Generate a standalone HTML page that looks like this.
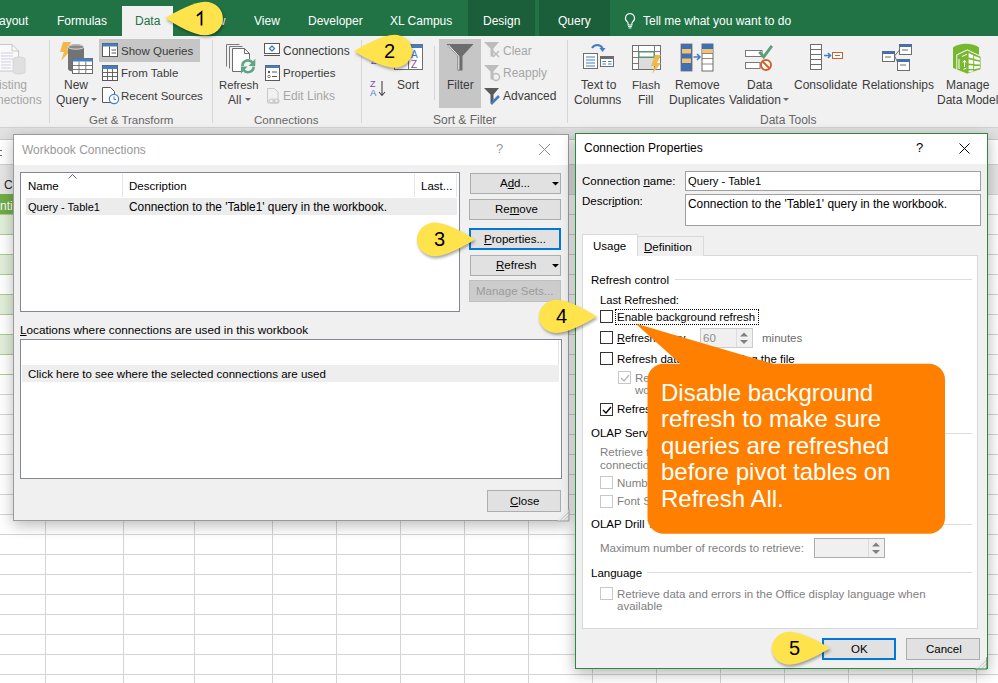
<!DOCTYPE html>
<html><head><meta charset="utf-8">
<style>
*{box-sizing:border-box;margin:0;padding:0}
html,body{width:998px;height:683px;overflow:hidden;background:#fff}
body{position:relative;font-family:"Liberation Sans",sans-serif}
.a{position:absolute}
.t{position:absolute;white-space:nowrap;font-size:11.5px;line-height:14px;color:#000}
.tab{color:#fff;font-size:12px}
.rb{color:#3b3b3b}
.gl{color:#666}
.dis{color:#a6a6a6}
.sep{position:absolute;width:1px;background:#d6d6d6}
.hl{position:absolute;background:#e1e1e1}
.u{text-decoration:underline}
.btn{background:#e1e1e1;border:1px solid #adadad}
.cb{width:13px;height:13px;background:#fff;border:1px solid #333}
</style></head><body>

<!-- ===== spreadsheet background ===== -->
<div class="a" style="left:0;top:127px;width:998px;height:13px;background:#e1e1e1;border-top:1px solid #d2d2d2;border-bottom:1px solid #c8c8c8"></div>
<div class="a" style="left:0;top:140px;width:998px;height:24px;background:#fff"></div>
<div class="a" style="left:0;top:164px;width:998px;height:30px;background:#e6e6e6;border-top:1px solid #d0d0d0"></div>
<svg class="a" style="left:0;top:148px" width="4" height="12"><path d="M0 2.5h2M0 7.5h2" stroke="#666" stroke-width="1.2"/></svg>
<div class="t" style="left:4px;top:178px;color:#262626;font-size:12px">C</div>
<div id="grid" class="a" style="left:0;top:194px;width:998px;height:489px;background-image:linear-gradient(to bottom,#d4d4d4 0,#d4d4d4 1px,transparent 1px);background-size:998px 20px"></div>
<div class="a" style="left:45px;top:164px;width:1px;height:519px;background:#d4d4d4"></div><div class="a" style="left:123px;top:164px;width:1px;height:519px;background:#d4d4d4"></div><div class="a" style="left:194px;top:164px;width:1px;height:519px;background:#d4d4d4"></div><div class="a" style="left:272px;top:164px;width:1px;height:519px;background:#d4d4d4"></div><div class="a" style="left:336px;top:164px;width:1px;height:519px;background:#d4d4d4"></div><div class="a" style="left:400px;top:164px;width:1px;height:519px;background:#d4d4d4"></div><div class="a" style="left:464px;top:164px;width:1px;height:519px;background:#d4d4d4"></div><div class="a" style="left:528px;top:164px;width:1px;height:519px;background:#d4d4d4"></div><div class="a" style="left:592px;top:164px;width:1px;height:519px;background:#d4d4d4"></div><div class="a" style="left:656px;top:164px;width:1px;height:519px;background:#d4d4d4"></div><div class="a" style="left:720px;top:164px;width:1px;height:519px;background:#d4d4d4"></div><div class="a" style="left:784px;top:164px;width:1px;height:519px;background:#d4d4d4"></div><div class="a" style="left:848px;top:164px;width:1px;height:519px;background:#d4d4d4"></div><div class="a" style="left:912px;top:164px;width:1px;height:519px;background:#d4d4d4"></div><div class="a" style="left:976px;top:164px;width:1px;height:519px;background:#d4d4d4"></div>
<!-- table rows at left -->
<div class="a" style="left:0;top:194px;width:14px;height:20px;background:#70ad47"></div>
<div class="t" style="left:0px;top:199px;color:#fff;font-size:12px">nti</div>
<div class="a" style="left:0;top:214px;width:14px;height:20px;background:#e2efda;border-top:1px solid #a9d08e"></div>
<div class="a" style="left:0;top:234px;width:14px;height:20px;background:#fff;border-top:1px solid #a9d08e"></div>
<div class="a" style="left:0;top:254px;width:14px;height:20px;background:#e2efda;border-top:1px solid #a9d08e"></div>
<div class="a" style="left:0;top:274px;width:14px;height:20px;background:#fff;border-top:1px solid #a9d08e"></div>
<div class="a" style="left:0;top:294px;width:14px;height:20px;background:#e2efda;border-top:1px solid #a9d08e"></div>
<div class="a" style="left:0;top:314px;width:14px;height:20px;background:#fff;border-top:1px solid #a9d08e"></div>
<div class="a" style="left:0;top:334px;width:14px;height:20px;background:#e2efda;border-top:1px solid #a9d08e"></div>
<div class="a" style="left:0;top:354px;width:14px;height:21px;background:#fff;border-top:1px solid #a9d08e;border-bottom:1px solid #a9d08e"></div>

<!-- ===== tab bar ===== -->
<div class="a" style="left:0;top:0;width:998px;height:36px;background:#217346"></div>
<div class="a" style="left:468px;top:0;width:67px;height:36px;background:#1b5e3a"></div>
<div class="a" style="left:539px;top:0;width:71px;height:36px;background:#1b5e3a"></div>
<div class="a" style="left:122px;top:6px;width:51px;height:30px;background:#f1f1f1"></div>
<div class="t tab" style="left:-1px;top:14px">ayout</div>
<div class="t tab" style="left:57px;top:14px">Formulas</div>
<div class="t tab" style="left:135px;top:14px;color:#217346">Data</div>
<div class="t tab" style="left:186px;top:14px">Review</div>
<div class="t tab" style="left:254px;top:14px">View</div>
<div class="t tab" style="left:308px;top:14px">Developer</div>
<div class="t tab" style="left:390px;top:14px">XL Campus</div>
<div class="t tab" style="left:483px;top:14px">Design</div>
<div class="t tab" style="left:558px;top:14px">Query</div>
<svg class="a" style="left:622px;top:11px" width="16" height="18" viewBox="0 0 16 18"><path d="M8 2.5a4.6 4.6 0 0 0-2.8 8.2c.6.6.9 1.3.9 2.1v1.2h3.8v-1.2c0-.8.3-1.5.9-2.1A4.6 4.6 0 0 0 8 2.5z" fill="none" stroke="#fff" stroke-width="1.1"/><path d="M6.1 15.5h3.8M6.6 17h2.8" stroke="#fff" stroke-width="1.1"/></svg>
<div class="t tab" style="left:643px;top:14px">Tell me what you want to do</div>

<!-- ===== ribbon ===== -->
<div class="a" style="left:0;top:36px;width:998px;height:91px;background:#f1f1f1"></div>
<div id="ribbon">
<!-- group: existing connections (faded) -->
<svg class="a" style="left:0;top:43px" width="28" height="32" viewBox="0 0 28 32"><path d="M-2 1.5h14l6.5 6.5v20H-2z" fill="#fafafa" stroke="#c8c8c8"/><path d="M12 1.5v6.5h6.5" fill="none" stroke="#c8c8c8"/><path d="M1 10h12M1 13h12M1 16h12M1 19h10M1 22h10M1 25h10" stroke="#d2cde0" stroke-width="1"/><path d="M13 16a6 2 0 0 1 12 0v13a6 2 0 0 1-12 0z" fill="#e0e0e0" stroke="#d6d6d6"/></svg>
<div class="t dis" style="left:-1px;top:78px;font-size:12px">isting</div>
<div class="t dis" style="left:-3px;top:93px;font-size:12px">nections</div>
<div class="sep" style="left:49px;top:40px;height:83px"></div>
<!-- New Query -->
<svg class="a" style="left:58px;top:41px" width="36" height="35" viewBox="0 0 36 35"><path d="M5 1h8l-4 8h4L3 20l3-9H2z" fill="#f0b94a"/><path d="M10 6a8 3 0 0 1 16 0v22a8 3 0 0 1-16 0z" fill="#737373"/><ellipse cx="18" cy="6" rx="8" ry="2.2" fill="#8a8a8a" stroke="#f1f1f1" stroke-width=".8"/><rect x="14.5" y="17.5" width="20" height="15" fill="#fff" stroke="#6d6d6d"/><rect x="14.5" y="17.5" width="20" height="3" fill="#4a7ebb"/><path d="M14.5 24.5h20M14.5 28.5h20M21 20.5v12M27.8 20.5v12" stroke="#6d6d6d" stroke-width=".9"/></svg>
<div class="t rb" style="left:64px;top:78px;font-size:12px">New</div>
<div class="t rb" style="left:56px;top:93px;font-size:12px">Query</div>
<svg class="a" style="left:91px;top:98px" width="6" height="4"><path d="M0 0h6L3 3z" fill="#666"/></svg>
<div class="hl" style="left:99px;top:39px;width:101px;height:23px;background:#c6c6c6"></div>
<svg class="a" style="left:101px;top:42px" width="18" height="16" viewBox="0 0 18 16"><rect x="1.5" y="1.5" width="15" height="13" fill="#fff" stroke="#595959"/><rect x="1.5" y="1.5" width="15" height="3" fill="#4a7ebb"/><path d="M8.5 4.5v10M10.5 8h4.5M10.5 11h4.5" stroke="#595959"/></svg>
<div class="t rb" style="left:121px;top:44px;font-size:11.5px">Show Queries</div>
<svg class="a" style="left:101px;top:64px" width="18" height="18" viewBox="0 0 18 18"><rect x="1.5" y="1.5" width="15" height="15" fill="#fff" stroke="#595959"/><rect x="1.5" y="1.5" width="15" height="3.5" fill="#4a7ebb"/><path d="M1.5 8.5h15M1.5 12.5h15M6.5 5v11.5M11.5 5v11.5" stroke="#595959" stroke-width=".9"/></svg>
<div class="t rb" style="left:121px;top:66px;font-size:11.5px">From Table</div>
<svg class="a" style="left:101px;top:86px" width="19" height="19" viewBox="0 0 19 19"><path d="M1.5 1.5h8l4 4v11h-12z" fill="#fff" stroke="#595959"/><circle cx="13" cy="13" r="4.6" fill="#fff" stroke="#3f7dc6" stroke-width="1.2"/><path d="M13 10.5v3h2" fill="none" stroke="#3f7dc6"/></svg>
<div class="t rb" style="left:121px;top:89px;font-size:11.5px">Recent Sources</div>
<div class="t gl" style="left:89px;top:113px;font-size:11.5px">Get &amp; Transform</div>
<div class="sep" style="left:212px;top:40px;height:83px"></div>
<!-- Refresh All -->
<svg class="a" style="left:224px;top:43px" width="34" height="33" viewBox="0 0 34 33"><path d="M2.5 1.5h13M2.5 1.5v22" fill="none" stroke="#7a7a7a"/><path d="M5.5 3.5h13M5.5 3.5v22" fill="none" stroke="#7a7a7a"/><path d="M8.5 5.5h12l5 5v18h-17z" fill="#fff" stroke="#6d6d6d"/><path d="M20.5 5.5v5h5" fill="none" stroke="#6d6d6d"/><circle cx="24" cy="23.3" r="7.5" fill="#f1f1f1"/><path d="M18.3 23A5.7 5.7 0 0 1 28.6 19.8M29.7 23.6A5.7 5.7 0 0 1 19.4 26.8" fill="none" stroke="#5fa585" stroke-width="2.6"/><path d="M31.3 15.8V23H24.5Z M16.9 30.8V23.6H23.5Z" fill="#5fa585"/></svg>
<div class="t rb" style="left:219px;top:78px;font-size:11.3px">Refresh</div>
<div class="t rb" style="left:228px;top:93px;font-size:12px">All</div>
<svg class="a" style="left:245px;top:98px" width="6" height="4"><path d="M0 0h6L3 3z" fill="#666"/></svg>
<svg class="a" style="left:263px;top:42px" width="18" height="15" viewBox="0 0 18 15"><rect x="1.5" y="1.5" width="15" height="10" fill="#fff" stroke="#595959"/><path d="M1 13.5h16" stroke="#595959"/><path d="M9 4l2.5 2.5L9 9 6.5 6.5z" fill="none" stroke="#3f7dc6" stroke-width="1.3"/></svg>
<div class="t rb" style="left:283px;top:44px;font-size:12px">Connections</div>
<svg class="a" style="left:264px;top:64px" width="17" height="18" viewBox="0 0 17 18"><rect x="1.5" y="1.5" width="14" height="15" fill="#fff" stroke="#595959"/><rect x="1.5" y="1.5" width="14" height="2.5" fill="#4a7ebb"/><circle cx="5" cy="8" r="1.2" fill="#595959"/><circle cx="5" cy="12.5" r="1.2" fill="none" stroke="#595959" stroke-width=".8"/><path d="M8 8h5M8 12.5h5" stroke="#595959"/></svg>
<div class="t rb" style="left:283px;top:66px;font-size:11.5px">Properties</div>
<svg class="a" style="left:265px;top:87px" width="16" height="18" viewBox="0 0 16 18"><path d="M2.5 1.5h7l3.5 3.5v11h-10.5z" fill="none" stroke="#c8c8c8"/><ellipse cx="7" cy="14" rx="3" ry="2" fill="none" stroke="#c8c8c8" stroke-width="1.2"/><ellipse cx="11" cy="14" rx="3" ry="2" fill="none" stroke="#c8c8c8" stroke-width="1.2"/></svg>
<div class="t dis" style="left:283px;top:89px;font-size:12px">Edit Links</div>
<div class="t gl" style="left:254px;top:113px;font-size:11.6px">Connections</div>
<div class="sep" style="left:361px;top:40px;height:83px"></div>
<!-- Sort -->
<svg class="a" style="left:368px;top:43px" width="56" height="28" viewBox="0 0 56 28"><rect x="26.5" y="1.5" width="28" height="25" fill="#fff" stroke="#6d6d6d"/><rect x="26.5" y="1.5" width="28" height="3.5" fill="#4a7ebb"/><path d="M40.5 5v21.5" stroke="#6d6d6d"/><text x="43" y="15" font-family="Liberation Sans" font-size="10" fill="#3f7dc6">A</text><text x="43" y="25" font-family="Liberation Sans" font-size="10" fill="#7d48a8">Z</text><text x="3" y="12" font-family="Liberation Sans" font-size="9" fill="#3f7dc6">A</text><text x="3" y="21" font-family="Liberation Sans" font-size="9" fill="#7d48a8">Z</text></svg>
<svg class="a" style="left:369px;top:79px" width="18" height="19" viewBox="0 0 18 19"><text x="1" y="8" font-family="Liberation Sans" font-size="9" fill="#7d48a8">Z</text><text x="1" y="17" font-family="Liberation Sans" font-size="9.5" fill="#3f7dc6">A</text><path d="M13 2v14M10 13l3 3.5 3-3.5" fill="none" stroke="#444" stroke-width="1.1"/></svg>
<div class="t rb" style="left:397px;top:78px;font-size:12px">Sort</div>
<div class="sep" style="left:434px;top:46px;height:54px"></div>
<div class="hl" style="left:439px;top:39px;width:42px;height:69px;background:#c6c6c6"></div>
<svg class="a" style="left:445px;top:43px" width="30" height="29" viewBox="0 0 30 29"><path d="M1.5 1h27L17.5 13v14.5h-5V13z" fill="#6d6d6d"/><path d="M3.5 2l10.3 11.3v13.5" fill="none" stroke="#fff" stroke-width="1"/></svg>
<div class="t rb" style="left:447px;top:78px;font-size:12px">Filter</div>
<svg class="a" style="left:483px;top:41px" width="18" height="18" viewBox="0 0 18 18"><path d="M1 1h15l-5.5 6.5v8h-3v-8z" fill="#bdbdbd"/><path d="M10 10l6 6M16 10l-6 6" stroke="#bdbdbd" stroke-width="1.5"/></svg>
<div class="t dis" style="left:503px;top:44px;font-size:12px">Clear</div>
<svg class="a" style="left:483px;top:64px" width="18" height="18" viewBox="0 0 18 18"><path d="M1 1h15l-5.5 6.5v8h-3v-8z" fill="#bdbdbd"/><circle cx="13" cy="13" r="3.5" fill="none" stroke="#bdbdbd" stroke-width="1.5"/></svg>
<div class="t dis" style="left:503px;top:66px;font-size:12px">Reapply</div>
<svg class="a" style="left:483px;top:87px" width="18" height="19" viewBox="0 0 18 19"><path d="M1 1h15l-5.5 6.5v8h-3v-8z" fill="#595959"/><path d="M8 17l8-8" stroke="#3f7dc6" stroke-width="2.5"/></svg>
<div class="t rb" style="left:503px;top:89px;font-size:12px">Advanced</div>
<div class="t gl" style="left:433px;top:113px;font-size:12px">Sort &amp; Filter</div>
<div class="sep" style="left:567px;top:40px;height:83px"></div>
<!-- Data tools -->
<svg class="a" style="left:582px;top:42px" width="33" height="28" viewBox="0 0 33 28"><path d="M10 6a6 6 0 0 1 10.5 0" fill="none" stroke="#3f7dc6" stroke-width="2"/><path d="M17.5 6h6l-3 4z" fill="#3f7dc6"/><rect x="1.5" y="11.5" width="14" height="15" fill="#fff" stroke="#6d6d6d"/><path d="M4 15h9M4 18h9M4 21h9M4 24h9" stroke="#3f7dc6"/><rect x="18.5" y="14.5" width="13" height="10" fill="#fff" stroke="#6d6d6d"/><rect x="18.5" y="14.5" width="13" height="2.5" fill="#6d6d6d"/><path d="M20.5 19.5h3.5M26 19.5h3.5M20.5 22h3.5M26 22h3.5" stroke="#3f7dc6"/></svg>
<div class="t rb" style="left:581px;top:78px;font-size:12px">Text to</div>
<div class="t rb" style="left:574px;top:93px;font-size:12px">Columns</div>
<svg class="a" style="left:631px;top:44px" width="32" height="31" viewBox="0 0 32 31"><rect x="1.5" y="1.5" width="28" height="24" fill="#fff" stroke="#6d6d6d"/><path d="M1.5 7.5h28M1.5 13.5h28M1.5 19.5h28M7.5 1.5v24M23.5 1.5v24" stroke="#6d6d6d" stroke-width=".9"/><rect x="8" y="8" width="15" height="5" fill="#fff" stroke="#4d9e6a"/><rect x="8" y="14" width="15" height="11" fill="#dcdcdc"/><path d="M24 11h6l-4 8h4l-9 11 3-8h-4z" fill="#f0b94a"/></svg>
<div class="t rb" style="left:632px;top:78px;font-size:11.5px">Flash</div>
<div class="t rb" style="left:638px;top:93px;font-size:12px">Fill</div>
<svg class="a" style="left:680px;top:43px" width="34" height="29" viewBox="0 0 34 29"><rect x="1" y="1" width="11" height="27" fill="#3f6fb4" stroke="#6d6d6d" stroke-width=".8"/><rect x="2" y="6" width="9" height="4.5" fill="#f3c26c"/><rect x="2" y="15.5" width="9" height="4.5" fill="#f3c26c"/><rect x="22" y="1" width="11" height="27" fill="#fff" stroke="#6d6d6d" stroke-width="1"/><rect x="22" y="1" width="11" height="5" fill="#3f6fb4"/><rect x="22.5" y="6" width="10" height="4.5" fill="#f3c26c"/><path d="M22 10.5h11M22 15.5h11M22 21h11" stroke="#6d6d6d" stroke-width=".8"/><path d="M13.5 14h6M17 11l3 3-3 3" fill="none" stroke="#3f7dc6" stroke-width="1.5"/></svg>
<div class="t rb" style="left:675px;top:78px;font-size:12px">Remove</div>
<div class="t rb" style="left:669px;top:93px;font-size:12px">Duplicates</div>
<svg class="a" style="left:744px;top:43px" width="31" height="30" viewBox="0 0 31 30"><rect x="1.5" y="7.5" width="16.5" height="6" fill="#fff" stroke="#7a7a7a"/><rect x="1.5" y="19.5" width="14.5" height="6" fill="#fff" stroke="#7a7a7a"/><path d="M15.3 8.8L19.7 13.9 27.9 2.9" fill="none" stroke="#5a9e7c" stroke-width="2.8"/><circle cx="22" cy="21.9" r="5" fill="#fff" stroke="#d2602b" stroke-width="2"/><path d="M18.6 18.5l6.8 6.8" stroke="#d2602b" stroke-width="2"/></svg>
<div class="t rb" style="left:747px;top:78px;font-size:12px">Data</div>
<div class="t rb" style="left:729px;top:93px;font-size:12px">Validation</div>
<svg class="a" style="left:783px;top:98px" width="6" height="4"><path d="M0 0h6L3 3z" fill="#666"/></svg>
<svg class="a" style="left:809px;top:43px" width="35" height="28" viewBox="0 0 35 28"><rect x="1.5" y="1.5" width="11" height="25" fill="#fff" stroke="#6d6d6d"/><path d="M1.5 6.5h11M1.5 11.5h11M1.5 16.5h11M1.5 21.5h11" stroke="#6d6d6d"/><path d="M15 12.5h6M19 10l2.5 2.5L19 15" fill="none" stroke="#3f7dc6" stroke-width="1.5"/><rect x="23.5" y="9.5" width="10" height="6" fill="#fff" stroke="#d2602b"/><path d="M26 12.5h5" stroke="#d2602b"/></svg>
<div class="t rb" style="left:794px;top:78px;font-size:12px">Consolidate</div>
<svg class="a" style="left:881px;top:43px" width="32" height="29" viewBox="0 0 32 29"><rect x="1.5" y="8.5" width="12" height="10" fill="#fff" stroke="#6d6d6d"/><rect x="1.5" y="8.5" width="12" height="2.5" fill="#3f6fb4"/><rect x="18.5" y="1.5" width="12" height="10" fill="#fff" stroke="#6d6d6d"/><rect x="18.5" y="1.5" width="12" height="2.5" fill="#3f6fb4"/><rect x="16.5" y="16.5" width="12" height="11" fill="#fff" stroke="#6d6d6d"/><rect x="16.5" y="16.5" width="12" height="2.5" fill="#3f6fb4"/><path d="M13.5 13l5-6M13.5 13l3 6M4 14h6M21 7h6M19 22h6" stroke="#6d6d6d"/></svg>
<div class="t rb" style="left:862px;top:78px;font-size:12px">Relationships</div>
<svg class="a" style="left:952px;top:42px" width="31" height="33" viewBox="0 0 31 33"><path d="M1 5.5C7 0.5 21 0.5 27 5.5V13L15.2 7.5 4.5 12.5V27.5L1 26Z" fill="#78b830"/><path d="M4.8 13L15.2 8 29 14.5V27.5L15.2 32 4.8 28Z" fill="#78b830" stroke="#f1f1f1" stroke-width=".9"/><path d="M16.6 11v4.4l4.6 1.2v-3.4z M22.2 13.8v3.1l5.6 1.3v-2.1z M16.6 17.2v4.2l4.6.6v-3.7z M22.2 18.7v3.5l5.6.2v-2.6z M16.6 23.2v3.8l4.6-.1v-3.5z M22.2 24v3.2l5.6-1.2v-2z M16.6 28.6v2l4.6-1.3v-1z" fill="#fff"/><path d="M7 17v10M10 14.5l5-2.2M11.5 27.5l3-1.5M12.5 25v-6M10.8 20.5l1.7-2 1.7 2" fill="none" stroke="#fff" stroke-width="1"/></svg>
<div class="t rb" style="left:946px;top:78px;font-size:12px">Manage</div>
<div class="t rb" style="left:937px;top:93px;font-size:12px">Data Model</div>
<div class="t gl" style="left:760px;top:113px;font-size:12px">Data Tools</div>
</div>

<div id="dlg1">
<!-- ===== Dialog 1: Workbook Connections ===== -->
<div class="a" style="left:13px;top:134px;width:556px;height:387px;background:#f0f0f0;border:1px solid #9a9a9a;box-shadow:0 4px 14px rgba(0,0,0,.28)"></div>
<div class="a" style="left:14px;top:135px;width:554px;height:30px;background:#fff"></div>
<div class="t" style="left:22px;top:143px;font-size:12px;color:#999">Workbook Connections</div>
<div class="t" style="left:496px;top:142px;font-size:13px;color:#999">?</div>
<svg class="a" style="left:538px;top:143px" width="13" height="13" viewBox="0 0 13 13"><path d="M1 1l11 11M12 1L1 12" stroke="#8a8a8a" stroke-width="1"/></svg>
<!-- listbox 1 -->
<div class="a" style="left:20px;top:172px;width:440px;height:140px;background:#fff;border:1px solid #828790"></div>
<svg class="a" style="left:68px;top:174px" width="9" height="5"><path d="M0.5 4.5l4-4 4 4" fill="none" stroke="#666"/></svg>
<div class="a" style="left:122px;top:174px;width:1px;height:23px;background:#e5e5e5"></div>
<div class="a" style="left:414px;top:174px;width:1px;height:23px;background:#e5e5e5"></div>
<div class="a" style="left:456px;top:174px;width:1px;height:23px;background:#e5e5e5"></div>
<div class="t" style="left:28px;top:179px">Name</div>
<div class="t" style="left:129px;top:179px">Description</div>
<div class="t" style="left:421px;top:179px">Last...</div>
<div class="a" style="left:26px;top:198px;width:431px;height:17px;background:#ececec"></div>
<div class="t" style="left:28px;top:200px;font-size:11px">Query - Table1</div>
<div class="t" style="left:129px;top:200px;font-size:11.85px">Connection to the 'Table1' query in the workbook.</div>
<!-- buttons -->
<div class="a btn" style="left:470px;top:173px;width:91px;height:21px"></div>
<div class="t" style="left:500px;top:176px">A<span class="u">d</span>d...</div>
<svg class="a" style="left:552px;top:182px" width="7" height="4"><path d="M0 0h7L3.5 3.5z" fill="#000"/></svg>
<div class="a btn" style="left:469px;top:199px;width:92px;height:21px"></div>
<div class="t" style="left:495px;top:202px">Re<span class="u">m</span>ove</div>
<div class="a btn" style="left:469px;top:228px;width:92px;height:22px;border:2px solid #0078d7"></div>
<div class="t" style="left:484px;top:232px"><span class="u">P</span>roperties...</div>
<div class="a btn" style="left:470px;top:255px;width:91px;height:21px"></div>
<div class="t" style="left:496px;top:258px"><span class="u">R</span>efresh</div>
<svg class="a" style="left:552px;top:264px" width="7" height="4"><path d="M0 0h7L3.5 3.5z" fill="#000"/></svg>
<div class="a btn" style="left:469px;top:280px;width:92px;height:22px;background:#cccccc;border-color:#bfbfbf"></div>
<div class="t" style="left:476px;top:284px;color:#9b9b9b">Manage Sets...</div>
<!-- locations -->
<div class="t" style="left:20px;top:323px;font-size:11.75px"><span class="u">L</span>ocations where connections are used in this workbook</div>
<div class="a" style="left:20px;top:339px;width:542px;height:140px;background:#fff;border:1px solid #828790"></div>
<div class="a" style="left:558px;top:340px;width:1px;height:25px;background:#e5e5e5"></div>
<div class="a" style="left:22px;top:365px;width:537px;height:17px;background:#eeeeee"></div>
<div class="t" style="left:28px;top:367px">Click here to see where the selected connections are used</div>
<div class="a btn" style="left:487px;top:490px;width:74px;height:22px"></div>
<div class="t" style="left:510px;top:494px"><span class="u">C</span>lose</div>
<svg class="a" style="left:556px;top:508px" width="14" height="14" viewBox="0 0 14 14"><path d="M13 1V13H1Z" fill="#cfcfcf"/><path d="M2.5 12.5L12.5 2.5M6 12.5l6.5-6.5M9.5 12.5l3-3" stroke="#f2f2f2" stroke-width="1.2"/><path d="M13 1V13H1" fill="none" stroke="#9a9a9a" stroke-width=".8"/></svg>
</div>
<div id="dlg2">
<!-- ===== Dialog 2: Connection Properties ===== -->
<div class="a" style="left:575px;top:133px;width:413px;height:536px;background:#f0f0f0;border:1px solid #2b8a3e;box-shadow:0 4px 14px rgba(0,0,0,.3)"></div>
<div class="a" style="left:576px;top:134px;width:411px;height:30px;background:#fff"></div>
<div class="t" style="left:584px;top:141px;font-size:12px">Connection Properties</div>
<div class="t" style="left:916px;top:141px;font-size:13px">?</div>
<svg class="a" style="left:958.5px;top:142.5px" width="11" height="11" viewBox="0 0 11 11"><path d="M.5 .5l10 10M10.5 .5l-10 10" stroke="#000" stroke-width="1"/></svg>
<div class="t" style="left:582px;top:174px">Connection <span class="u">n</span>ame:</div>
<div class="a" style="left:685px;top:171px;width:296px;height:20px;background:#fff;border:1px solid #a0a0a0"></div>
<div class="t" style="left:688px;top:174px;font-size:11.2px">Query - Table1</div>
<div class="t" style="left:582px;top:194px">Descr<span class="u">i</span>ption:</div>
<div class="a" style="left:685px;top:194px;width:296px;height:32px;background:#fff;border:1px solid #a0a0a0"></div>
<div class="t" style="left:688px;top:197px;font-size:11.9px">Connection to the 'Table1' query in the workbook.</div>
<!-- tabs -->
<div class="a" style="left:582px;top:255px;width:396px;height:374px;background:#fff;border:1px solid #d9d9d9"></div>
<div class="a" style="left:637px;top:236px;width:67px;height:20px;background:#f0f0f0;border:1px solid #d9d9d9;border-bottom:none"></div>
<div class="a" style="left:582px;top:234px;width:56px;height:22px;background:#fff;border:1px solid #d9d9d9;border-bottom:none"></div>
<div class="t" style="left:593px;top:239px">Usa<span class="u">g</span>e</div>
<div class="t" style="left:644px;top:240px"><span class="u">D</span>efinition</div>
<!-- page -->
<div class="t" style="left:591px;top:273px">Refresh control</div>
<div class="a" style="left:675px;top:279px;width:297px;height:1px;background:#dcdcdc"></div>
<div class="t" style="left:600px;top:293px;font-size:11.2px">Last Refreshed:</div>
<div class="a cb" style="left:600px;top:310px"></div>
<div class="t" style="left:617px;top:310px">Enable back<span class="u">g</span>round refresh</div>
<div class="a" style="left:615px;top:309px;width:144px;height:16px;border:1px dotted #000"></div>
<div class="a cb" style="left:600px;top:331px"></div>
<div class="t" style="left:617px;top:331px;font-size:11px"><span class="u">R</span>efresh every</div>
<div class="a" style="left:700px;top:328px;width:53px;height:20px;background:#f0f0f0;border:1px solid #cccccc"></div>
<div class="a" style="left:736px;top:329px;width:16px;height:18px;background:#f0f0f0;border-left:1px solid #dcdcdc"></div>
<svg class="a" style="left:739px;top:332px" width="10" height="13"><path d="M1 4.5h8L5 .5z M1 8h8l-4 4z" fill="#808080"/></svg>
<div class="t" style="left:703px;top:331px;color:#8d8d8d">60</div>
<div class="t" style="left:762px;top:331px;color:#6d6d6d">minutes</div>
<div class="a cb" style="left:600px;top:352px"></div>
<div class="t" style="left:617px;top:352px">Refresh data when opening the file</div>
<div class="a cb" style="left:618px;top:371px;border-color:#c8c8c8"></div>
<svg class="a" style="left:619px;top:372px" width="12" height="12" viewBox="0 0 12 12"><path d="M2 6l3 3 5-6" fill="none" stroke="#b8b8b8" stroke-width="1.3"/></svg>
<div class="t" style="left:635px;top:371px;color:#808080">Remove data from the external data range before saving the</div>
<div class="t" style="left:635px;top:383px;color:#808080">workbook</div>
<div class="a cb" style="left:600px;top:403px"></div>
<svg class="a" style="left:601px;top:404px" width="12" height="12" viewBox="0 0 12 12"><path d="M2 6l3 3 5-6" fill="none" stroke="#000" stroke-width="1.3"/></svg>
<div class="t" style="left:617px;top:402px">Refresh this connection on Refresh <span class="u">A</span>ll</div>
<div class="t" style="left:591px;top:426px">OLAP Server Formatting</div>
<div class="a" style="left:730px;top:433px;width:242px;height:1px;background:#dcdcdc"></div>
<div class="t" style="left:600px;top:445px;color:#808080">Retrieve the following formats from the server when using this</div>
<div class="t" style="left:600px;top:458px;color:#808080">connection:</div>
<div class="a cb" style="left:600px;top:476px;border-color:#c8c8c8"></div>
<div class="t" style="left:617px;top:476px;color:#808080">Number Format</div>
<div class="a cb" style="left:600px;top:495px;border-color:#c8c8c8"></div>
<div class="t" style="left:617px;top:494px;color:#808080">Font Style</div>
<div class="t" style="left:591px;top:517px">OLAP Drill Through</div>
<div class="a" style="left:710px;top:524px;width:262px;height:1px;background:#dcdcdc"></div>
<div class="t" style="left:600px;top:541px;color:#808080">Maximum number of records to retrieve:</div>
<div class="a" style="left:814px;top:538px;width:71px;height:20px;background:#f0f0f0;border:1px solid #adadad"></div>
<div class="a" style="left:868px;top:539px;width:16px;height:18px;border-left:1px solid #dcdcdc"></div>
<svg class="a" style="left:871px;top:542px" width="10" height="13"><path d="M1 4.5h8L5 .5z M1 8h8l-4 4z" fill="#808080"/></svg>
<div class="t" style="left:591px;top:566px">Language</div>
<div class="a" style="left:647px;top:572px;width:325px;height:1px;background:#dcdcdc"></div>
<div class="a cb" style="left:600px;top:587px;border-color:#c8c8c8"></div>
<div class="t" style="left:617px;top:587px;color:#808080">Retrieve data and errors in the Office display language when</div>
<div class="t" style="left:617px;top:599px;color:#808080">available</div>
<!-- OK / Cancel -->
<div class="a btn" style="left:822px;top:638px;width:74px;height:22px;border:2px solid #0078d7"></div>
<div class="t" style="left:851px;top:642px">OK</div>
<div class="a btn" style="left:906px;top:638px;width:74px;height:22px"></div>
<div class="t" style="left:926px;top:642px">Cancel</div>
<svg class="a" style="left:974px;top:656px" width="14" height="14" viewBox="0 0 14 14"><path d="M13 1V13H1Z" fill="#cfcfcf"/><path d="M2.5 12.5L12.5 2.5M6 12.5l6.5-6.5M9.5 12.5l3-3" stroke="#f2f2f2" stroke-width="1.2"/><path d="M13 1V13H1" fill="none" stroke="#2b8a3e" stroke-width="1"/></svg>
</div>
<div id="callouts">
<svg class="a" style="left:0;top:0;filter:drop-shadow(1px 2px 1.5px rgba(0,0,0,.35))" width="998" height="683" viewBox="0 0 998 683">
<g fill="#ffe34c">
<path d="M204.9 1.7C195.0 1.7 177.1 10.9 165.2 18C177.1 26.1 195.0 35.3 204.9 35.3A18 16.8 0 0 0 204.9 1.7Z"/>
<path d="M394.1 34.8C384.1 34.8 366.0 43.8 354 51.2C366.0 58.7 384.1 67.7 394.1 67.7A18 16.45 0 0 0 394.1 34.8Z"/>
<path d="M434.9 222.6C444.8 222.6 462.8 231.9 474.7 239.4C462.8 247.0 444.8 256.3 434.9 256.3A18 16.85 0 0 1 434.9 222.6Z"/>
<path d="M556.8 299.8C566.8 299.8 584.9 309.0 596.9 316.6C584.9 323.9 566.8 333.1 556.8 333.1A18 16.65 0 0 1 556.8 299.8Z"/>
<path d="M789.7 631.8C799.8 631.8 817.9 640.9 830 648.3C817.9 655.7 799.8 664.8 789.7 664.8A18 16.5 0 0 1 789.7 631.8Z"/>
</g>
</svg>
<svg class="a" style="left:0;top:0" width="210" height="30"><path d="M196.9 15.9L201.5 12.2V25.4" fill="none" stroke="#000" stroke-width="1.75"/></svg>
<div class="t" style="left:384px;top:40px;font-size:20px;line-height:22px">2</div>
<div class="t" style="left:434px;top:228px;font-size:20px;line-height:22px">3</div>
<div class="t" style="left:556px;top:305px;font-size:20px;line-height:22px">4</div>
<div class="t" style="left:789px;top:637px;font-size:20px;line-height:22px">5</div>
<svg class="a" style="left:0;top:0" width="998" height="683" viewBox="0 0 998 683">
<path d="M635.5 323.5L681 364.5L775.5 364.5Z" fill="#ff8000"/>
<rect x="647.5" y="363.8" width="297.5" height="170" rx="16" ry="16" fill="#ff8000"/>
</svg>
<div class="a" style="left:661px;top:379.5px;width:290px;color:#fff;font-size:24px;line-height:26.5px;white-space:nowrap">Disable background<br>refresh to make sure<br>queries are refreshed<br>before pivot tables on<br>Refresh All.</div>
</div>
</body></html>
